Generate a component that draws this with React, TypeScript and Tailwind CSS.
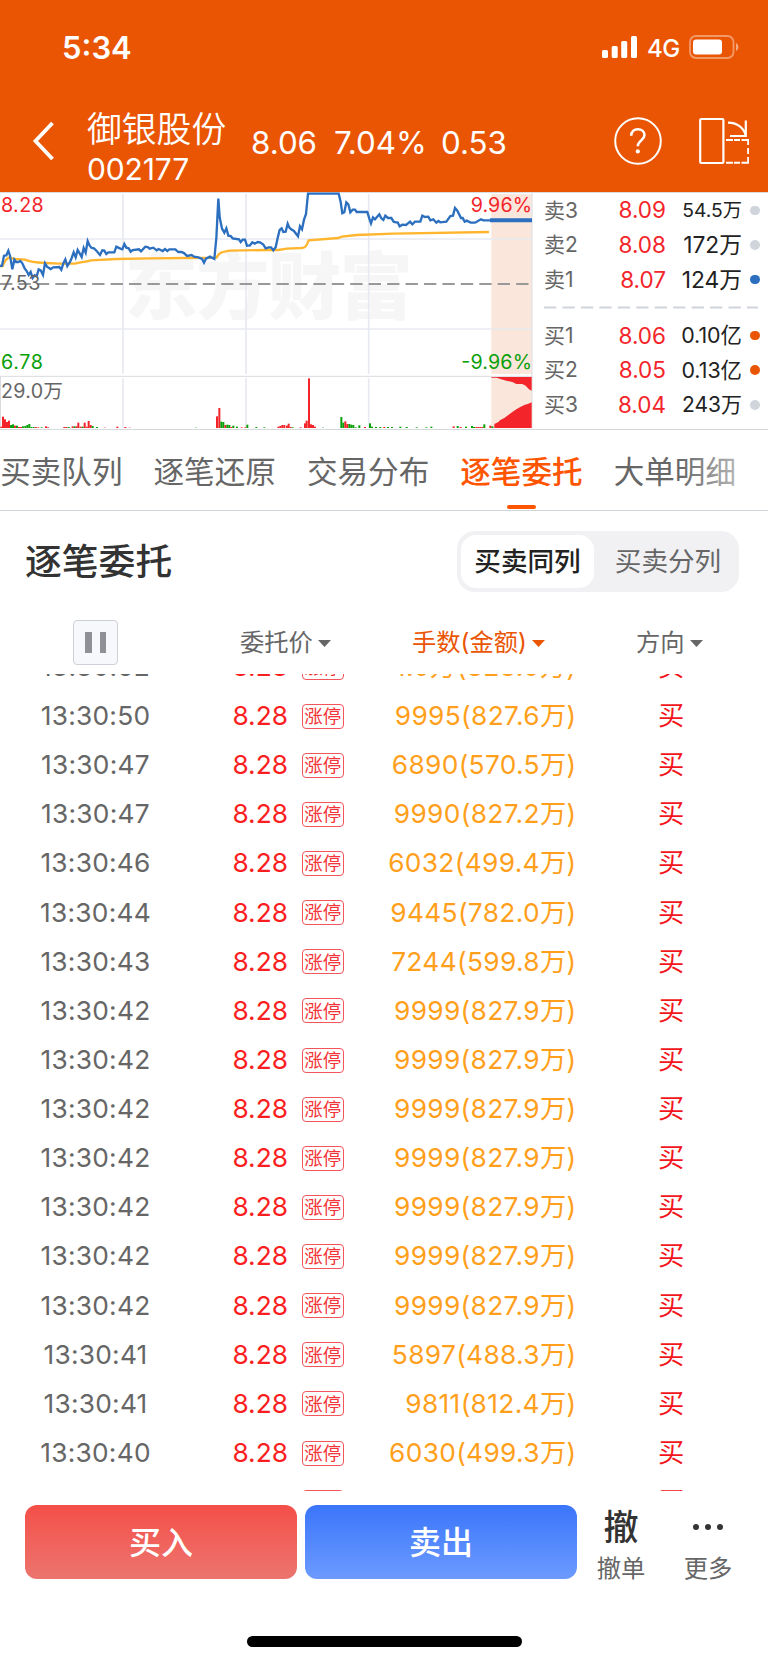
import React from "react";

type Quote = {
  label: string;
  price: string;
  volume: string;
  volumeClass: string;
  dot: string;
};

const SELLS: Quote[] = [
  { label: "卖3", price: "8.09", volume: "54.5万", volumeClass: "text-[19.3px]", dot: "bg-[#d0d4db]" },
  { label: "卖2", price: "8.08", volume: "172万", volumeClass: "text-[22.8px]", dot: "bg-[#d0d4db]" },
  { label: "卖1", price: "8.07", volume: "124万", volumeClass: "text-[22.8px]", dot: "bg-[#2c6fbf]" },
];

const BUYS: Quote[] = [
  { label: "买1", price: "8.06", volume: "0.10亿", volumeClass: "text-[21.4px]", dot: "bg-[#ea5504]" },
  { label: "买2", price: "8.05", volume: "0.13亿", volumeClass: "text-[21.4px]", dot: "bg-[#ea5504]" },
  { label: "买3", price: "8.04", volume: "243万", volumeClass: "text-[21px]", dot: "bg-[#d0d4db]" },
];

const TABS = ["买卖队列", "逐笔还原", "交易分布", "逐笔委托", "大单明细"];

const ORDERS: [string, string][] = [
  ["13:30:52", "1.0万(828.0万)"],
  ["13:30:50", "9995(827.6万)"],
  ["13:30:47", "6890(570.5万)"],
  ["13:30:47", "9990(827.2万)"],
  ["13:30:46", "6032(499.4万)"],
  ["13:30:44", "9445(782.0万)"],
  ["13:30:43", "7244(599.8万)"],
  ["13:30:42", "9999(827.9万)"],
  ["13:30:42", "9999(827.9万)"],
  ["13:30:42", "9999(827.9万)"],
  ["13:30:42", "9999(827.9万)"],
  ["13:30:42", "9999(827.9万)"],
  ["13:30:42", "9999(827.9万)"],
  ["13:30:42", "9999(827.9万)"],
  ["13:30:41", "5897(488.3万)"],
  ["13:30:41", "9811(812.4万)"],
  ["13:30:40", "6030(499.3万)"],
  ["13:30:40", "6030(499.3万)"],
];

const PRICE_LINE =
  "0,234 6,233 12,203 19,202 25,188 30,203 37,244 43,215 48,222 55,222 61,219 67,226 74,241 80,249 86,261 92,252 98,270 104,262 110,265 116,244 122,247 129,261 135,226 141,236 152,243 160,238 178,237 184,245 190,226 196,214 202,234 210,222 215,210 221,193 227,208 233,186 239,196 245,207 251,180 257,194 263,159 269,173 275,180 282,181 290,189 300,201 307,187 313,188 319,198 325,193 343,193 349,176 361,182 367,184 373,168 379,179 386,181 392,191 398,186 417,184 423,190 436,176 443,177 449,182 460,179 470,187 476,183 488,189 495,183 502,189 508,184 526,184 535,192 545,192 553,196 561,204 575,201 582,206 595,208 606,213 612,224 618,212 630,206 643,213 649,150 655,32 659,88 666,122 673,134 679,121 685,143 692,144 698,151 710,153 717,154 722,162 728,155 735,155 741,173 750,172 757,163 764,167 773,162 780,163 790,170 797,181 806,178 813,178 820,187 827,178 833,150 839,126 845,121 850,132 857,131 863,107 868,119 875,125 881,128 894,145 900,115 906,124 912,95 918,78 924,17 1016,17 1022,42 1027,76 1033,73 1039,43 1045,49 1051,73 1058,65 1065,65 1070,72 1102,72 1108,92 1113,106 1119,88 1125,94 1138,79 1144,91 1150,96 1156,83 1164,90 1174,90 1181,101 1187,103 1193,103 1199,115 1207,110 1218,111 1224,106 1230,101 1237,109 1245,101 1261,101 1267,83 1275,87 1285,86 1291,97 1300,94 1309,104 1315,99 1321,103 1339,101 1351,84 1359,83 1365,60 1372,68 1383,90 1388,90 1394,101 1400,98 1412,104 1425,104 1443,94 1450,97 1470,97";

const AVG_LINE =
  "M0,234 L8,234 C14,220 20,212 26,209 L45,213 L75,215 C90,222 110,224 135,225 L180,227 L225,227 C240,222 255,223 272,217 L350,213 L450,211 L560,210 L650,209 C655,195 665,192 690,188 L800,186 L835,186 L860,182 L905,180 C920,178 920,170 926,157 L1015,150 L1025,146 L1070,141 L1180,137 L1467,132";

// x, height, r = red / g = green
const VOLUME_BARS: [number, number, "r" | "g"][] = [
  [1, 4, "r"], [6, 34, "r"], [12, 26, "r"], [18, 18, "r"], [24, 22, "r"], [30, 9, "g"], [36, 11, "g"], [42, 7, "r"],
  [48, 7, "g"], [54, 3, "r"], [60, 3, "r"], [66, 5, "g"], [73, 6, "g"], [79, 9, "g"], [85, 12, "g"], [91, 3, "g"],
  [98, 3, "g"], [104, 3, "r"], [112, 2, "r"], [122, 2, "g"], [135, 5, "r"], [141, 2, "r"], [190, 3, "r"], [196, 3, "r"],
  [203, 3, "g"], [215, 5, "r"], [221, 5, "g"], [227, 5, "r"], [232, 16, "r"], [239, 4, "r"], [245, 4, "g"], [251, 16, "r"],
  [257, 4, "r"], [263, 21, "r"], [269, 9, "r"], [275, 6, "g"], [288, 3, "g"], [312, 1, "r"], [349, 4, "r"], [373, 3, "r"],
  [386, 1, "r"], [585, 1, "g"], [648, 35, "r"], [655, 60, "r"], [661, 19, "g"], [667, 18, "g"], [673, 9, "r"], [679, 10, "g"],
  [685, 9, "g"], [691, 3, "r"], [697, 7, "g"], [708, 4, "g"], [722, 2, "r"], [733, 2, "r"], [739, 10, "g"], [766, 3, "g"],
  [790, 2, "g"], [832, 4, "r"], [838, 6, "r"], [844, 9, "r"], [850, 9, "r"], [858, 7, "r"], [863, 13, "r"], [869, 3, "r"],
  [875, 2, "g"], [899, 2, "r"], [912, 14, "r"], [917, 22, "r"], [924, 149, "r"], [930, 11, "r"], [936, 9, "r"], [942, 4, "r"],
  [966, 1, "g"], [1021, 33, "g"], [1027, 16, "g"], [1033, 20, "r"], [1039, 12, "r"], [1045, 12, "g"], [1051, 10, "g"], [1057, 9, "g"],
  [1064, 2, "g"], [1075, 8, "g"], [1092, 3, "r"], [1107, 14, "g"], [1113, 4, "g"], [1125, 3, "g"], [1138, 3, "g"], [1150, 3, "r"],
  [1161, 3, "g"], [1173, 3, "g"], [1198, 4, "g"], [1217, 3, "g"], [1247, 2, "g"], [1276, 2, "g"], [1291, 4, "g"], [1358, 5, "r"],
  [1370, 6, "g"], [1379, 3, "r"], [1395, 4, "g"], [1413, 6, "g"], [1419, 3, "g"], [1426, 3, "r"], [1432, 3, "r"], [1438, 3, "r"],
  [1444, 3, "r"], [1450, 11, "g"], [1468, 7, "r"], [1474, 5, "g"],
];

const StatusBar: React.FC = () => (
  <div className="flex h-[94px] items-center justify-between pl-[62px] pr-[28px]">
    <span className="pt-px text-[31px] leading-none font-semibold">5:34</span>
    <div className="flex items-center">
      <svg className="h-[22px] w-9" viewBox="0 0 36 22" fill="currentColor">
        <rect x="0" y="14" width="6" height="8" rx="1.5" />
        <rect x="9.7" y="10" width="6" height="12" rx="1.5" />
        <rect x="19.2" y="5" width="6" height="17" rx="1.5" />
        <rect x="29" y="0" width="6" height="22" rx="1.5" />
      </svg>
      <span className="mt-[3px] ml-[9px] w-[33px] text-[24px] leading-none font-medium tracking-[-0.6px]">4G</span>
      <svg className="ml-[9px] h-6 w-[51px]" viewBox="0 0 51 24">
        <rect x="1" y="1" width="43.5" height="22" rx="6" fill="none" stroke="#fff" strokeOpacity="0.4" strokeWidth="1.8" />
        <rect x="4" y="4.5" width="29" height="15" rx="3" fill="#fff" />
        <path d="M47 8c3.2 1.5 3.2 6.5 0 8z" fill="#fff" fillOpacity="0.5" />
      </svg>
    </div>
  </div>
);

const NavBar: React.FC = () => (
  <div className="flex h-[98px] items-start">
    <svg className="mt-[26px] ml-[32px] h-[42px] w-6" viewBox="0 0 24 42" fill="none" stroke="currentColor" strokeWidth="3.8">
      <path d="M20.5 3L3.5 21l17 18" />
    </svg>
    <div className="ml-[31px] w-[140px] pt-[16px]">
      <div className="text-[34.8px] leading-[38px] font-[350]">御银股份</div>
      <div className="mt-[7px] text-[30px] leading-[29px] tracking-[-0.15px]">002177</div>
    </div>
    <div className="ml-[24px] flex pt-[33px] text-[31.3px] leading-[32px]">
      <span className="w-[83px]">8.06</span>
      <span className="w-[107px]">7.04%</span>
      <span>0.53</span>
    </div>
    <svg className="mt-[23px] ml-auto h-12 w-12" viewBox="0 0 48 48" fill="none" stroke="currentColor">
      <circle cx="24" cy="24" r="22.8" strokeWidth="2" />
      <path d="M17.2 18.8c0-4.200 2.900-6.600 6.700-6.600s6.600 2.500 6.600 5.800c0 5.200-6.700 5.600-6.700 11.200" strokeWidth="2.600" />
      <circle cx="23.8" cy="34.400" r="2.100" fill="currentColor" stroke="none" />
    </svg>
    <svg className="mt-[23px] mr-[19px] ml-[37px] h-12 w-[50px]" viewBox="0 0 50 48" fill="none" stroke="currentColor" strokeWidth="2.200">
      <rect x="1.2" y="2" width="23.2" height="44" rx="1" />
      <path d="M29 5.600c8.500 0 15.500 4.400 17.600 12.400M46.800 3.500v15.500H31" />
      <path d="M27 23h7M35 23h6M42.500 23h6.700v5M49.2 31v6M49.2 40v5.700h-6.700M41 45.700h-6M34 45.700h-7" strokeWidth="2" />
    </svg>
  </div>
);

const PriceChart: React.FC = () => (
  <svg className="h-[238px] w-[534px]" viewBox="0 12 1602 714">
    {/* watermark */}
    <text x="374" y="374" fontSize="219" fontWeight="900" fill="#f6f6f6" textLength="864">东方财富</text>
    <rect x="1474" y="18" width="121" height="540" fill="#fae6da" />
    <rect x="1474" y="567" width="121" height="153" fill="#fae6da" />
    <g stroke="#e8eaf1" strokeWidth="5">
      <path d="M0 153H1595M0 423H1595" />
      <path d="M369 18V558M738 18V558M1106 18V558M369 571V720M738 571V720M1106 571V720" />
    </g>
    <g stroke="#d9dbdf" strokeWidth="3">
      <path d="M0 13.5H1602M0 565H1596M1596 13V721M1.5 565V721" />
    </g>
    <path d="M0 288H1590" stroke="#999" strokeWidth="5.5" strokeDasharray="37 18.3" />
    <path d={AVG_LINE} fill="none" stroke="#ffb62e" strokeWidth="7" />
    <polyline points={PRICE_LINE} fill="none" stroke="#2c6fbf" strokeWidth="7" />
    <path d="M1470 97H1596" stroke="#2c6fbf" strokeWidth="12" />
    {VOLUME_BARS.map(([x, h, c]) => (
      <rect key={x} x={x} y={720 - h} width="6" height={h} fill={c === "r" ? "#f3252b" : "#0aa00a"} />
    ))}
    <path
      d="M1483 720V708L1495 702L1501 696L1513 690L1525 681L1537 672L1549 664L1561 657L1573 651L1585 647L1595 643V720Z"
      fill="#f3252b"
    />
    <path
      d="M1474 567H1595V608L1587 604L1577 593L1567 588H1549L1537 582L1519 578L1501 573L1490 569H1474Z"
      fill="#f3252b"
    />
    <g fontSize="59">
      <text x="3" y="71" fill="#f3252b" textLength="128">8.28</text>
      <text x="3" y="306" fill="#666" textLength="118">7.53</text>
      <text x="3" y="542" fill="#0aa00a" textLength="126">6.78</text>
      <text x="3" y="629" fill="#666" textLength="186">29.0万</text>
      <text x="1412" y="71" fill="#f3252b" textLength="184">9.96%</text>
      <text x="1384" y="542" fill="#0aa00a" textLength="212">-9.96%</text>
    </g>
  </svg>
);

const QuoteRow: React.FC<{ quote: Quote }> = ({ quote }) => (
  <div className="flex h-[34.7px] items-center">
    <span className="w-[48px] text-[21px] text-[#666]">{quote.label}</span>
    <span className="w-[74px] text-right text-[22.5px] text-[#f3252b]">{quote.price}</span>
    <span className={`w-[76px] text-right whitespace-nowrap text-[#222] ${quote.volumeClass}`}>{quote.volume}</span>
    <span className={`ml-[8px] size-[9.5px] rounded-full ${quote.dot}`} />
  </div>
);

const OrderBook: React.FC = () => (
  <div className="flex-1 border-t border-[#d9dbdf] pl-[10px]">
    {SELLS.map((q) => (
      <QuoteRow key={q.label} quote={q} />
    ))}
    <svg className="mt-[9px] mb-[9px] h-[3px] w-[214px]" viewBox="0 0 214 3">
      <path d="M0 1.5H214" stroke="#d0d4db" strokeWidth="2" strokeDasharray="12.3 6.15" />
    </svg>
    {BUYS.map((q) => (
      <QuoteRow key={q.label} quote={q} />
    ))}
  </div>
);

const SortHeader: React.FC<{ label: string; className: string }> = ({ label, className }) => (
  <div className={`flex items-center gap-[5px] text-[24.3px] leading-none whitespace-nowrap ${className}`}>
    {label}
    <svg className="mt-[2px] h-[7px] w-[13px]" viewBox="0 0 13 7" fill="currentColor">
      <path d="M0 0h13L6.500 7z" />
    </svg>
  </div>
);

const App: React.FC = () => {
  return (
    <div className="h-[1663px] w-[768px] overflow-hidden bg-white font-['Inter','Noto_Sans_CJK_SC',sans-serif]">
      <header className="bg-[#ea5504] text-white">
        <StatusBar />
        <NavBar />
      </header>

      <section className="flex h-[238px] border-b border-[#d5d9dc]">
        <PriceChart />
        <OrderBook />
      </section>

      {/* Tabs */}
      <nav className="relative flex h-[81px] gap-[30.7px] overflow-hidden border-b border-[#d0d6d9]">
        {TABS.map((tab) => (
          <div
            key={tab}
            className={`relative flex w-[122.7px] shrink-0 items-center justify-center pt-[4px] text-[30.6px] whitespace-nowrap ${
              tab === "逐笔委托" ? "font-medium text-[#ff5400]" : "text-[#666]"
            }`}
          >
            {tab}
            {tab === "逐笔委托" && (
              <span className="absolute bottom-[1px] h-[4.5px] w-[29px] rounded-full bg-[#ff5400]" />
            )}
          </div>
        ))}
        <div className="absolute top-0 right-0 h-full w-[90px] bg-gradient-to-r from-white/0 to-white/80" />
      </nav>

      <div className="flex h-[101px] items-center justify-between pr-[29px] pl-[25px]">
        <h2 className="pt-[2px] text-[36.8px] leading-none font-medium text-[#333]">逐笔委托</h2>
        <div className="flex h-[61.5px] w-[282px] rounded-[18px] bg-[#f1f1f4] p-1 text-[26.6px]">
          <div className="flex w-[133px] items-center justify-center rounded-[15px] bg-white font-medium text-[#222]">
            买卖同列
          </div>
          <div className="flex flex-1 items-center justify-center pl-[7px] text-[#666]">买卖分列</div>
        </div>
      </div>

      {/* Column headers */}
      <div className="flex h-[62px] items-center pb-px">
        <div className="ml-[73px] flex size-[45px] items-center justify-center gap-2 rounded-[4px] border border-[#cfd1d8] bg-[#f7f8fb]">
          <span className="h-[21px] w-[6.5px] bg-[#8f8f96]" />
          <span className="h-[21px] w-[6.5px] bg-[#8f8f96]" />
        </div>
        <SortHeader label="委托价" className="ml-[122px] w-[172px] text-[#666]" />
        <SortHeader label="手数(金额)" className="w-[224px] text-[#ea5504]" />
        <SortHeader label="方向" className="text-[#666]" />
      </div>

      {/* Orders */}
      <div className="h-[817px] overflow-hidden">
        <div className="-mt-[31.5px]">
          {ORDERS.map(([time, amount], i) => (
            <div key={i} className="flex h-[49.13px] items-center text-[26.3px] leading-none whitespace-nowrap">
              <span className="w-[191px] text-center tracking-[0.25px] text-[#666]">{time}</span>
              <span className="w-[97px] text-right text-[#fa1e1e]">8.28</span>
              <span className="ml-[14px] flex h-[25px] w-[41.5px] items-center justify-center rounded-[4px] border border-[#f3555a] text-[18.4px] text-[#f3353a]">
                涨停
              </span>
              <span className="w-[233px] text-right tracking-[0.35px] text-[#ff9f1c]">{amount}</span>
              <span className="ml-[81.5px] text-[#f3151b]">买</span>
            </div>
          ))}
        </div>
      </div>

      {/* Bottom actions */}
      <div className="mt-[14px] flex h-[74px] items-center">
        <button className="ml-[25px] h-full w-[272px] rounded-[12px] bg-gradient-to-b from-[#f44e48] to-[#ec746e] pt-px text-[32px] font-medium text-white">
          买入
        </button>
        <button className="ml-2 h-full w-[272px] rounded-[12px] bg-gradient-to-b from-[#3a75fa] to-[#6c9aff] pt-px text-[32px] font-medium text-white">
          卖出
        </button>
        <div className="ml-[18px] w-[52px] pt-[6px] text-center">
          <div className="text-[35px] leading-[42px] font-medium text-[#333]">撤</div>
          <div className="mt-[3px] text-[24.3px] leading-[34px] text-[#666]">撤单</div>
        </div>
        <div className="ml-[35px] w-[52px] pt-[6px] text-center">
          <div className="flex h-[42px] items-center justify-center gap-[6px]">
            <span className="size-[6px] rounded-full bg-[#333]" />
            <span className="size-[6px] rounded-full bg-[#333]" />
            <span className="size-[6px] rounded-full bg-[#333]" />
          </div>
          <div className="mt-[3px] text-[24.3px] leading-[34px] text-[#666]">更多</div>
        </div>
      </div>
      <div className="mx-auto mt-[57px] h-[11px] w-[275px] rounded-full bg-black" />
    </div>
  );
};

export default App;
